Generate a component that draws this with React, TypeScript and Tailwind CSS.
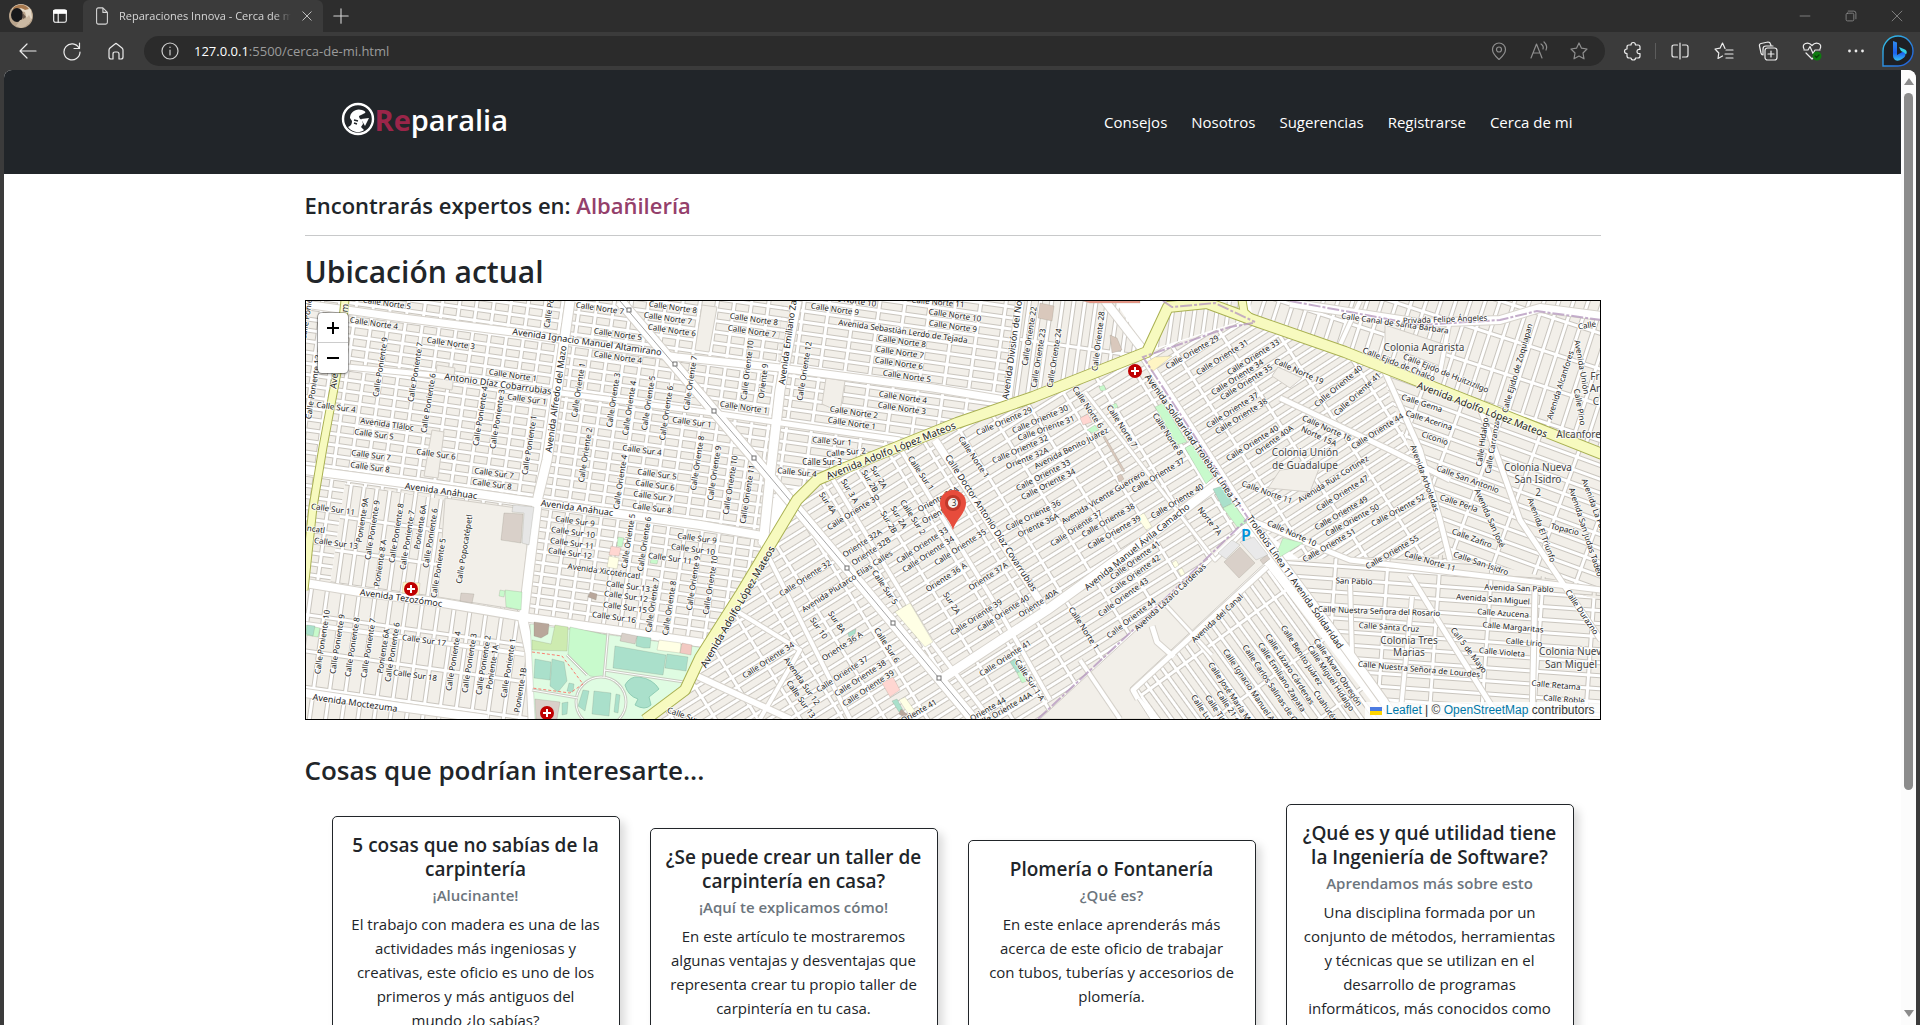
import type { ReactNode } from "react";

const UI = "font-['Open_Sans','Noto_Sans',sans-serif]";

/* ---------- Browser chrome ---------- */

function Icon({ children, size = 20, className = "" }: { children: ReactNode; size?: number; className?: string }) {
  return (
    <svg
      viewBox="0 0 20 20"
      width={size}
      height={size}
      fill="none"
      stroke="currentColor"
      strokeWidth="1.2"
      strokeLinecap="round"
      strokeLinejoin="round"
      className={className}
      aria-hidden="true"
    >
      {children}
    </svg>
  );
}

function IconButton({ label, className = "", children }: { label: string; className?: string; children: ReactNode }) {
  return (
    <button type="button" aria-label={label} className={`flex h-7 shrink-0 items-center justify-center ${className}`}>
      {children}
    </button>
  );
}

function TabStrip() {
  return (
    <div className="flex h-8 items-stretch bg-[#2d2d2d] text-[#d6d6d6]">
      <div className="flex w-[83px] items-center gap-[17px] pl-2">
        <button type="button" aria-label="Perfil" className="shrink-0">
          <svg viewBox="0 0 26 26" width="26" height="26">
            <circle cx="13" cy="13" r="12" fill="#b9a48c" />
            <path d="M4 6C8 0 18 0 23 7l1 8-4 6-3-12z" fill="#e4d9c8" />
            <path d="M5 5c5-5 13-4 16 1l-4 1C13 4 8 5 6 9z" fill="#a8794e" />
            <ellipse cx="9" cy="12" rx="6" ry="7" fill="#17181b" />
            <path d="M12 17c4 0 7-2 9-5l2 4c-2 5-6 8-10 9l-5-2z" fill="#cbb9a3" />
            <path d="M14 9l4 5-3 2z" fill="#6b5b50" />
          </svg>
        </button>
        <IconButton label="Áreas de trabajo" className="text-white">
          <Icon size={18}>
            <rect x="3" y="3" width="14" height="14" rx="2" />
            <path d="M3 4h14v3H3z" fill="currentColor" />
            <path d="M8 7v10" />
          </Icon>
        </IconButton>
      </div>
      <div className="flex w-60 items-center rounded-t-md bg-[#3b3b3b] pl-2.5">
        <Icon size={18} className="shrink-0">
          <path d="M4 3q0-2 2-2h5l5 5v11q0 2-2 2H6q-2 0-2-2zM11 1v5h5" />
        </Icon>
        <span className={`${UI} ml-2 flex-1 overflow-hidden mask-r-from-90% text-[11px] whitespace-nowrap`}>
          Reparaciones Innova - Cerca de mi
        </span>
        <IconButton label="Cerrar pestaña" className="w-8">
          <Icon size={14}>
            <path d="M4 4l12 12M16 4L4 16" />
          </Icon>
        </IconButton>
      </div>
      <IconButton label="Nueva pestaña" className="ml-1 w-7 self-center">
        <Icon size={18}>
          <path d="M10 2v16M2 10h16" />
        </Icon>
      </IconButton>
      <div className="ml-auto flex items-center text-[#8c8c8c]">
        <IconButton label="Minimizar" className="w-[46px]">
          <Icon size={14}>
            <path d="M3 10h14" />
          </Icon>
        </IconButton>
        <IconButton label="Restaurar" className="w-[46px]">
          <Icon size={14}>
            <rect x="3" y="6" width="11" height="11" rx="2" />
            <path d="M6 3h8q3 0 3 3v8" />
          </Icon>
        </IconButton>
        <IconButton label="Cerrar" className="w-[46px]">
          <Icon size={14}>
            <path d="M3 3l14 14M17 3L3 17" />
          </Icon>
        </IconButton>
      </div>
    </div>
  );
}

function Toolbar() {
  return (
    <div className="flex h-[38px] items-center bg-[#3b3b3b] pr-0.5 pl-1.5 text-[#ececec]">
      <IconButton label="Atrás" className="w-11">
        <Icon>
          <path d="M18 10H2M9 3l-7 7 7 7" />
        </Icon>
      </IconButton>
      <IconButton label="Actualizar" className="w-11">
        <Icon>
          <path d="M17 7A8 8 0 1 0 18 11M17.500 2v5.500H12" />
        </Icon>
      </IconButton>
      <IconButton label="Inicio" className="w-11">
        <Icon>
          <path d="M3 9q0-1 1-2l5-4q1-1 2 0l5 4q1 1 1 2v7q0 2-2 2h-2v-5q0-2-2-2h-2q-2 0-2 2v5H5q-2 0-2-2z" />
        </Icon>
      </IconButton>
      <div className="ml-1.5 flex h-[30px] flex-1 items-center rounded-full bg-[#2b2b2b] pr-1.5 pl-4">
        <Icon className="shrink-0 text-[#cfcfcf]">
          <circle cx="10" cy="10" r="8" />
          <path d="M10 9v5M10 6v0.500" />
        </Icon>
        <div className={`${UI} ml-3.5 flex-1 text-[13px] leading-5`}>
          <span className="text-white">127.0.0.1</span>
          <span className="text-[#9b9b9b]">:5500/cerca-de-mi.html</span>
        </div>
        <div className="flex text-[#8e8e8e]">
          <IconButton label="Ubicación" className="w-10">
            <Icon>
              <path d="M10 18.500C6 15 3.500 12 3.500 8.500a6.500 6.500 0 0 1 13 0C16.500 12 14 15 10 18.500z" />
              <circle cx="10" cy="8.500" r="2.500" />
            </Icon>
          </IconButton>
          <IconButton label="Leer en voz alta" className="w-10">
            <Icon>
              <path d="M2 17L7.500 3 13 17M4 12h7M12 3q3 2 2 5M15 1q4 4 2 8" />
            </Icon>
          </IconButton>
          <IconButton label="Agregar a favoritos" className="w-10">
            <Icon>
              <path d="M10 2l2.500 5.200 5.500.8-4 4 1 5.800-5-2.800-5 2.800 1-5.800-4-4 5.500-.8z" />
            </Icon>
          </IconButton>
        </div>
      </div>
      <IconButton label="Extensiones" className="ml-2.5 w-9">
        <Icon>
          <path d="M4 6q0-2 2-2h2q0-2.500 2.200-2.500T12.500 4H15q2 0 2 2v2.500q-3-.5-3 2t3 2V15q0 2-2 2h-2.500q0 2-2.200 2T8 17H6q-2 0-2-2v-2.500q-2.500 0-2.500-2.200T4 8z" />
        </Icon>
      </IconButton>
      <span className="ml-1 h-4 w-px bg-[#5c5c5c]" />
      <IconButton label="Pantalla dividida" className="ml-0.5 w-11">
        <Icon>
          <path d="M7.500 4H4Q2 4 2 6v8q0 2 2 2h3.500M12.500 4H16q2 0 2 2v8q0 2-2 2h-3.500M10 2v16" />
        </Icon>
      </IconButton>
      <IconButton label="Favoritos" className="w-11">
        <Icon>
          <path d="M11 7.500L8.500 2 6 7.200l-5 .8 3.800 4L4 17.500 8.500 15M12 9h7M11 13h8M12 17h7" />
        </Icon>
      </IconButton>
      <IconButton label="Colecciones" className="w-11">
        <Icon>
          <rect x="7" y="7" width="12" height="12" rx="2.500" />
          <path d="M13 10v6M10 13h6M5 14q-1.500 0-2-2L1.500 5Q1 3 3 2.500L10 1q2 0 2.500 2l.5 1.500M5 14V8q0-3 3-3h7" />
        </Icon>
      </IconButton>
      <IconButton label="Rendimiento" className="w-11">
        <Icon>
          <path d="M2 8Q0 4 3.500 2.500 7 1 10 4.500 13 1 16.500 2.500 20 4 18 8M2 9h4l2-3.500 3 7L13 9h5M4 12l6 6 2-2" />
          <circle cx="15" cy="15" r="4.500" fill="#0f7b10" stroke="none" />
          <path d="M13 15l1.500 1.500L17 14" stroke="#0a3d0a" />
        </Icon>
      </IconButton>
      <IconButton label="Más opciones" className="w-11">
        <Icon>
          <g fill="currentColor" stroke="none">
            <circle cx="3.500" cy="10" r="1.400" />
            <circle cx="10" cy="10" r="1.400" />
            <circle cx="16.500" cy="10" r="1.400" />
          </g>
        </Icon>
      </IconButton>
      <IconButton label="Bing" className="w-10">
        <svg viewBox="0 0 32 32" width="32" height="32" aria-hidden="true">
          <defs>
            <linearGradient id="bing-ring" x1="0" y1="0" x2="1" y2="1">
              <stop offset="0" stopColor="#35c6e8" />
              <stop offset="1" stopColor="#2257d8" />
            </linearGradient>
            <linearGradient id="bing-b" x1="0" y1="0" x2="0" y2="1">
              <stop offset="0" stopColor="#2f8cf0" />
              <stop offset="0.600" stopColor="#1c60ee" />
              <stop offset="1" stopColor="#36c3f2" />
            </linearGradient>
          </defs>
          <path d="M1 31V16A15 15 0 1 1 16 31z" fill="#1e2024" stroke="url(#bing-ring)" strokeWidth="1.400" />
          <path d="M11 6l4 1.500V20l8-4.500q2 6-3 8.500-4 3-7 1-2-1.500-2-4z" fill="url(#bing-b)" />
          <path d="M17 12l6 2.500q3 2 1 5l-2-2-3-1.500z" fill="#35d0e6" />
        </svg>
      </IconButton>
    </div>
  );
}

/* ---------- Map ---------- */

type Label = [text: string, x: number, y: number, angle: number];

const STREETS: Label[] = [
  ["Calle Norte 5", 387, 303, 8], ["Calle Norte 4", 374, 323, 8], ["Calle Norte 3", 451, 343, 8],
  ["Calle Norte 7", 600, 308, 8], ["Calle Norte 8", 673, 307, 8], ["Calle Norte 7", 668, 318, 8],
  ["Calle Norte 6", 672, 330, 8], ["Calle Norte 5", 618, 334, 8], ["Calle Norte 4", 618, 357, 8],
  ["Calle Norte 1", 513, 375, 8], ["Calle Sur 1", 527, 399, 8], ["Calle Sur 1", 692, 422, 8],
  ["Calle Sur 4", 642, 450, 8], ["Calle Sur 4", 336, 407, 8], ["Avenida Tláloc", 387, 424, 8],
  ["Calle Sur 5", 374, 434, 8], ["Calle Sur 7", 371, 455, 8], ["Calle Sur 6", 436, 454, 8],
  ["Calle Norte 1", 744, 407, 8], ["Calle Poniente 9", 380, 367, -81], ["Calle Poniente 7", 415, 372, -81],
  ["Calle Poniente 6", 428, 403, -81], ["Calle Poniente 4", 480, 416, -81], ["Calle Poniente 3", 497, 419, -81],
  ["Calle Poniente 1", 529, 445, -81], ["Calle Poniente 12", 313, 387, -81], ["Calle Poniente 1", 551, 298, -81],
  ["Calle Poniente", 307, 313, -81], ["Calle Oriente 1", 578, 390, -81], ["Calle Oriente 3", 613, 400, -81],
  ["Calle Oriente 4", 629, 408, -81], ["Calle Oriente 5", 648, 403, -81], ["Calle Oriente 6", 666, 413, -81],
  ["Calle Oriente 7", 690, 383, -81], ["Calle Oriente 2", 585, 455, -81], ["Calle Oriente 8", 697, 463, -81],
  ["Calle Oriente 9", 714, 473, -81], ["Calle Oriente 10", 730, 485, -81], ["Calle Oriente 4", 620, 482, -81],
  ["Calle Sur 8", 370, 467, 8], ["Calle Sur 7", 494, 473, 8], ["Calle Sur 8", 492, 484, 8],
  ["Calle Sur 11", 333, 509, 8], ["Calle Sur 13", 336, 543, 8], ["Calle Sur 9", 575, 521, 8],
  ["Calle Sur 10", 573, 532, 8], ["Calle Sur 11", 572, 543, 8], ["Calle Sur 12", 570, 553, 8],
  ["Avenida Xicoténcatl", 604, 571, 8], ["Calle Sur 13", 628, 586, 8], ["Calle Sur 12", 626, 596, 8],
  ["Calle Sur 15", 625, 607, 8], ["Calle Sur 16", 614, 617, 8], ["Calle Sur 5", 657, 474, 8],
  ["Calle Sur 6", 655, 485, 8], ["Calle Sur 7", 653, 496, 8], ["Calle Sur 8", 652, 508, 8],
  ["Calle Sur 9", 697, 538, 8], ["Calle Sur 10", 693, 549, 8], ["Calle Sur 11", 670, 558, 8],
  ["Calle Sur 17", 424, 640, 8], ["Calle Sur 18", 415, 675, 8], ["Poniente 9A", 362, 520, -81],
  ["Calle Poniente 9", 372, 530, -81], ["Poniente 8 A", 380, 563, -81], ["Calle Poniente 8", 396, 533, -81],
  ["Calle Poniente 7", 407, 540, -81], ["Poniente 6A", 420, 527, -81], ["Calle Poniente 6", 430, 538, -81],
  ["Calle Poniente 5", 438, 568, -81], ["Calle Popocatépetl", 464, 549, -81], ["Calle Oriente 5", 628, 541, -81],
  ["Calle Oriente 6", 644, 544, -81], ["Calle Oriente 7", 652, 605, -81], ["Calle Oriente 8", 669, 608, -81],
  ["Calle Oriente 9", 693, 583, -81], ["Calle Oriente 10", 710, 585, -81], ["Calle Poniente 10", 322, 642, -81],
  ["Calle Poniente 9", 337, 644, -81], ["Calle Poniente 8", 352, 647, -81], ["Calle Poniente 7", 368, 648, -81],
  ["Poniente 6A", 383, 651, -81], ["Calle Poniente 6", 392, 652, -81], ["Calle Poniente 4", 453, 661, -81],
  ["Calle Poniente 3", 469, 663, -81], ["Calle Poniente 2", 483, 665, -81], ["Poniente 1A", 492, 667, -81],
  ["Calle Poniente 1", 508, 668, -81], ["Poniente 1B", 520, 690, -81], ["ncatl", 316, 529, 8], ["Calle Sur", 683, 715, 20],
  ["Calle Norte 8", 754, 319, 8], ["Calle Norte 7", 752, 331, 8], ["Calle Norte 9", 835, 309, 8],
  ["Calle Norte 10", 955, 315, 8], ["Calle Norte 9", 953, 326, 8], ["Avenida Sebastián Lerdo de Tejada", 903, 331, 8],
  ["Calle Norte 8", 902, 341, 8], ["Calle Norte 7", 900, 352, 8], ["Calle Norte 6", 899, 363, 8],
  ["Calle Norte 5", 907, 376, 8], ["Calle Norte 4", 903, 397, 8], ["Calle Norte 3", 902, 408, 8],
  ["Calle Norte 2", 854, 412, 8], ["Calle Norte 1", 852, 423, 8], ["Calle Norte 10", 850, 300, 8],
  ["Calle Norte 11", 938, 302, 5], ["Calle Sur 1", 832, 441, 5], ["Calle Sur 2", 846, 452, -5],
  ["Calle Sur 3", 822, 462, 0], ["Calle Sur 4", 797, 472, 6], ["Calle Oriente 10", 747, 370, -83],
  ["Oriente 9", 763, 381, -83], ["Calle Oriente 12", 804, 371, -81], ["Calle Oriente 22", 1029, 336, -81],
  ["Calle Oriente 23", 1038, 358, -81], ["Calle Oriente 24", 1054, 358, -81], ["Calle Oriente 28", 1098, 341, -83],
  ["Calle Oriente 11", 747, 494, -81], ["Calle Oriente 29", 1004, 421, -23], ["Calle Oriente 30", 1040, 419, -23],
  ["Calle Oriente 31", 1046, 428, -20], ["Calle Oriente 32", 1020, 449, -23], ["Oriente 32A", 1027, 458, -22],
  ["Avenida Benito Juárez", 1071, 448, -27], ["Calle Oriente 33", 1043, 475, -27], ["Calle Oriente 34", 1048, 484, -27],
  ["Calle Oriente 36", 1033, 515, -26], ["Oriente 36A", 1038, 525, -26], ["Avenida Vicente Guerrero", 1103, 497, -31],
  ["Calle Oriente 37", 1076, 528, -33], ["Calle Oriente 38", 1108, 520, -30], ["Calle Oriente 39", 1114, 532, -30],
  ["Calle Norte 6", 1088, 407, 56], ["Calle Norte 7", 1122, 426, 57], ["Calle Norte 1", 974, 457, 56],
  ["Calle Sur 1", 921, 473, 56], ["Sur 2A", 879, 477, 60], ["Sur 2B", 870, 481, 60], ["Sur 3 A", 850, 491, 60],
  ["Sur 4A", 828, 503, 57], ["Calle Oriente 30", 853, 512, -32], ["Sur 2A", 899, 517, 60], ["Sur 2B", 889, 522, 60],
  ["Calle Sur 2", 913, 517, 57], ["Oriente 32A", 938, 499, -28], ["Oriente 32", 940, 512, -28],
  ["Calle Oriente 33", 922, 545, -33], ["Calle Oriente 34", 928, 554, -33], ["Calle Oriente 35", 960, 547, -33],
  ["Oriente 32A", 862, 543, -33], ["Oriente 32B", 871, 551, -33], ["Avenida Plutarco Elías Calles", 847, 581, -33],
  ["Calle Oriente 32", 805, 578, -33], ["Oriente 36 A", 946, 577, -33], ["Oriente 37A", 988, 576, -33],
  ["Calle Oriente 39", 976, 617, -33], ["Calle Oriente 40", 1003, 613, -33], ["Oriente 40A", 1038, 603, -33],
  ["Calle Oriente 41", 1135, 560, -36], ["Calle Oriente 42", 1135, 574, -36], ["Calle Oriente 43", 1123, 597, -36],
  ["Calle Oriente 44", 1131, 618, -38], ["Calle Sur 5", 885, 587, 56], ["Sur 8A", 837, 622, 56], ["Sur 10", 819, 628, 56],
  ["Oriente 36 A", 842, 646, -33], ["Calle Oriente 34", 768, 660, -33], ["Avenida Sur 12", 802, 681, 55],
  ["Calle Sur 13", 801, 699, 55], ["Calle Oriente 37", 842, 674, -33], ["Calle Oriente 38", 860, 678, -33],
  ["Calle Oriente 39", 868, 688, -33], ["Calle Sur 6", 887, 645, 57], ["Sur 2A", 952, 603, 57],
  ["Calle Oriente 41", 1005, 658, -33], ["Calle Sur 1-A", 1030, 680, 57], ["Calle Oriente 44", 979, 714, -30],
  ["Calle Oriente 44A", 1003, 710, -30], ["Calle Oriente 41", 910, 716, -30], ["Calle Norte 1", 1084, 628, 57],
  ["Calle Oriente 29", 1192, 352, -30], ["Calle Oriente 31", 1222, 357, -32], ["Calle Oriente 33", 1253, 357, -32],
  ["Calle Oriente 34", 1237, 377, -32], ["Calle Oriente 35", 1246, 382, -32], ["Calle Norte 19", 1299, 371, 24],
  ["Calle Oriente 40", 1338, 386, -40], ["Calle Oriente 41", 1357, 394, -42], ["Calle Oriente 37", 1232, 410, -32],
  ["Calle Oriente 38", 1241, 416, -32], ["Calle Oriente 40", 1252, 443, -32], ["Oriente 40A", 1274, 440, -36],
  ["Calle Norte 16", 1327, 428, 24], ["Norte 15A", 1319, 436, 24], ["Calle Oriente 44", 1377, 431, -32],
  ["Calle Norte 8", 1168, 434, 57], ["Calle Oriente 37", 1158, 475, -31], ["Calle Oriente 40", 1177, 501, -31],
  ["Calle Canal de Santa Bárbara", 1395, 323, 8], ["Privada Felipe Ángeles", 1445, 319, -2], ["Calle", 1587, 325, -10],
  ["Calle Ejido de Chalco", 1399, 364, 22], ["Calle Ejido de Huitzizilgo", 1446, 373, 22],
  ["Calle Ejido de Zoquiapan", 1517, 368, -74], ["Avenida Alcanfores", 1560, 385, -72], ["Avenida Unión", 1582, 367, 80],
  ["Calle Pino", 1580, 407, 80], ["Calle Gema", 1422, 403, 18], ["Calle Acerina", 1429, 420, 18], ["Ciconio", 1435, 438, 18],
  ["Calle Hidalgo", 1482, 442, -82], ["Calle Carranza", 1492, 447, -80], ["Calle San Antonio", 1468, 479, 20],
  ["Avenida Arboledas", 1425, 478, 70], ["Calle Perla", 1459, 503, 19], ["Avenida Ruiz Cortinez", 1333, 479, -32],
  ["Calle Oriente 47", 1342, 493, -32], ["Calle Norte 11", 1267, 492, 20], ["Calle Oriente 49", 1341, 513, -30],
  ["Calle Oriente 50", 1352, 520, -28], ["Calle Oriente 52", 1398, 510, -28], ["Calle Oriente 51", 1329, 545, -30],
  ["Calle Oriente 55", 1392, 552, -30], ["Calle Norte 10", 1292, 533, 24], ["Calle Norte 11", 1430, 561, 17],
  ["Calle Zafiro", 1472, 538, 20], ["Calle San Isidro", 1481, 563, 19], ["Topacio", 1565, 529, 14],
  ["Avenida San José", 1490, 518, 66], ["Avenida El Triunfo", 1542, 530, 70], ["Avenida San Judas Tadeo", 1586, 532, 72],
  ["Avenida La Paz", 1594, 505, 70], ["Norte 7A", 1210, 521, 52], ["Avenida Lázaro Cárdenas", 1170, 597, -43],
  ["Avenida del Canal", 1217, 618, -43], ["San Pablo", 1354, 581, 2], ["Avenida San Pablo", 1519, 588, 2],
  ["Avenida San Miguel", 1493, 599, 4], ["Calle Nuestra Señora del Rosario", 1379, 611, 2], ["Calle Azucena", 1503, 613, 4],
  ["Calle Margaritas", 1513, 627, 5], ["Calle Santa Cruz", 1389, 627, 4], ["Calle Lirio", 1524, 642, 5],
  ["Calle Violeta", 1502, 652, 5], ["Calle Nuestra Señora de Lourdes", 1419, 669, 5], ["Calle Retama", 1556, 685, 5],
  ["Calle Roble", 1564, 699, 5], ["Call 5 de Mayo", 1469, 650, 53], ["Calle Durazno", 1582, 612, 56],
  ["Calle Álvaro Obregón", 1338, 672, 56], ["Calle Miguel Hidalgo", 1331, 678, 56], ["Calle Benito Juárez", 1302, 655, 57],
  ["Calle Lázaro Cárdenas", 1290, 669, 57], ["Calle Emiliano Zapata", 1282, 677, 57],
  ["Calle Carlos Salinas de Gortari", 1276, 692, 56], ["Calle Ignacio Manuel Altamirano", 1259, 700, 56],
  ["Calle José María Morelos", 1236, 701, 56], ["Calle 21 de Marzo", 1237, 719, 56], ["Calle Tierra", 1219, 713, 56],
  ["Calle Luis", 1203, 710, 56], ["Cuahutémoc", 1329, 711, 56],
];

const AVENUES: Label[] = [
  ["Avenida Ignacio Manuel Altamirano", 587, 342, 8], ["Antonio Díaz Cobarrubias", 498, 384, 8],
  ["Avenida Alfredo del Mazo", 556, 399, -82], ["Avenida Anáhuac", 441, 491, 8], ["Avenida Anáhuac", 577, 508, 8],
  ["Avenida Tezozómoc", 401, 598, 8], ["Avenida Moctezuma", 355, 703, 8], ["Avenida Emiliano Zapata", 789, 333, -82],
  ["Avenida División del Norte", 1013, 344, -82], ["Calle Doctor Antonio Díaz Covarrubias", 991, 523, 57],
  ["Avenida Manuel Ávila Camacho", 1137, 547, -39], ["Avenida Solidaridad Trolebús Línea 11", 1193, 441, 55],
  ["Trolebús Línea 11 Avenida Solidaridad", 1295, 582, 55], ["Ave", 334, 381, -84], ["m", 345, 308, -84],
];

const MAIN_AVENUES: Label[] = [
  ["Avenida Adolfo López Mateos", 738, 607, -60],
  ["Avenida Adolfo López Mateos", 891, 451, -22],
  ["Avenida Adolfo López Mateos", 1482, 410, 21],
];

const PLACES: Label[] = [
  ["Colonia Agrarista", 1424, 348, 0], ["Colonia Unión", 1305, 453, 0], ["de Guadalupe", 1305, 466, 0],
  ["Colonia Nueva", 1538, 468, 0], ["San Isidro", 1538, 480, 0], ["2", 1538, 493, 0], ["Colonia Tres", 1409, 641, 0],
  ["Marias", 1409, 653, 0], ["Colonia Nueva", 1573, 652, 0], ["San Miguel", 1571, 665, 0], ["Alcanfores", 1581, 435, 0],
  ["Fr", 1595, 377, 0], ["Ar", 1595, 389, 0], ["C", 1596, 402, 0],
];

/* Block sizes and heading of each neighbourhood's street grid. */
const GRIDS = [
  { id: "west", w: 17, h: 11, angle: 8 },
  { id: "west-tall", w: 13, h: 34, angle: 8 },
  { id: "south-west", w: 16, h: 36, angle: 8 },
  { id: "north", w: 25, h: 11, angle: 8 },
  { id: "north-tall", w: 11, h: 60, angle: 8 },
  { id: "centre", w: 36, h: 11, angle: -32 },
  { id: "union", w: 48, h: 10, angle: -33 },
  { id: "east", w: 42, h: 13, angle: 20 },
  { id: "north-east", w: 14, h: 34, angle: 18 },
  { id: "south-east", w: 52, h: 13, angle: 4 },
  { id: "canal", w: 62, h: 11, angle: 54 },
];

const DISTRICTS: [grid: string, points: string][] = [
  ["west", "305,301 800,301 767,540 700,655 523,620 305,586"],
  ["south-west", "305,586 523,618 531,719 305,719"],
  ["north", "782,301 1024,301 1008,402 820,478 768,500"],
  ["north-tall", "1022,301 1115,301 1145,348 1008,400"],
  ["centre", "800,495 830,475 1145,358 1250,520 1040,719 645,719 690,690 745,600"],
  ["union", "1148,352 1253,318 1380,368 1450,560 1300,560 1245,515"],
  ["north-tall", "1170,305 1240,301 1250,318 1150,350"],
  ["north-east", "1250,301 1601,301 1601,450 1253,320"],
  ["east", "1380,368 1601,455 1601,600 1450,560"],
  ["south-east", "1275,560 1450,555 1601,590 1601,719 1392,719"],
  ["canal", "1267,567 1385,719 1160,719 1133,690"],
];

const OPEN_BLOCKS = [
  "445,498 531,510 520,610 438,597",
  "1040,719 1245,530 1268,560 1130,688 1150,719",
  "437,365 455,368 452,390 434,387",
  "432,430 444,432 438,478 424,476",
  "826,378 845,381 840,412 822,404",
  "702,305 717,307 709,352 695,350",
  "1385,325 1446,345 1440,366 1385,345",
  "1278,367 1302,378 1290,388 1272,376",
  "1280,470 1320,466 1310,492 1268,488",
];

const WHITE_ROADS: [points: string, width: number][] = [
  ["305,304 403,318 513,332 677,357 780,368 933,388 1005,400", 7],
  ["347,367 433,375 553,392 713,413 843,432 900,440", 5],
  ["305,470 403,483 540,503 700,525 768,537", 8],
  ["305,583 360,592 443,603 530,618 703,643", 8],
  ["305,624 400,637 524,654", 4],
  ["305,693 400,707 487,719", 8],
  ["570,301 547,460 538,497 523,620 530,653 533,719", 9],
  ["797,301 780,390 770,477 763,545", 9],
  ["1020,301 1007,403", 8],
  ["620,301 754,458 847,568 893,623 973,719", 10],
  ["1105,301 1143,350", 8],
  ["940,680 1047,610 1140,543 1220,482", 9],
  ["1145,358 1250,520 1300,587 1347,650 1383,700 1395,719", 8],
  ["1267,567 1133,690 1138,699", 5],
  ["935,440 1047,612", 7],
  ["1085,392 1215,560 1246,530", 3],
  ["830,475 930,640 990,719", 4],
  ["895,440 1000,612 1050,700", 4],
  ["760,540 850,719", 4],
  ["735,610 800,650 760,719", 4],
  ["695,675 790,719", 6],
  ["1385,372 1420,450 1440,520 1450,560", 5],
  ["1478,402 1520,520 1601,640", 5],
  ["1410,575 1450,640 1500,719", 5],
  ["1350,580 1352,655", 4],
  ["1535,590 1532,719", 5],
  ["1412,597 1400,719", 4],
  ["1280,398 1390,450 1450,480", 5],
  ["1250,520 1350,560 1601,590", 5],
  ["1360,301 1340,345", 4],
  ["1450,320 1440,372", 4],
  ["1290,303 1420,323 1500,320 1540,308 1601,316", 8],
  ["1163,602 1212,655", 3],
  ["1152,626 1157,642 1174,657", 5],
  ["1080,660 1120,719", 4],
];

const YELLOW_ROADS: [points: string, width: number][] = [
  ["645,720 685,690 700,658 740,595 797,500 817,480 840,470 957,423 1033,397 1147,352 1168,307 1207,303 1253,320 1345,352 1602,454", 11],
  ["345,300 338,367 323,447 313,507 304,590", 8],
  ["1242,300 1244,312 1253,320", 8],
];

const BOUNDARIES = [
  "1038,719 1133,630 1248,518 1143,357 1230,327 1253,323",
  "1163,301 1172,307 1215,303 1255,322",
  "1290,301 1420,325 1500,320 1537,311 1601,320",
];

const AREAS: [fill: string, points: string][] = [
  ["#dffce2", "530,624 705,648 698,662 684,690 643,719 535,719"],
  ["#cdebb0", "532,650 532,640 551,644 555,625 568,627 567,651"],
  ["#c8facc", "570,627 607,635 605,678 590,676 568,655"],
  ["#aae0cb", "615,646 666,655 663,675 613,668"],
  ["#aae0cb", "667,654 688,657 686,671 665,668"],
  ["#aae0cb", "535,659 551,662 550,680 534,678"],
  ["#aae0cb", "552,659 564,662 567,681 558,692 550,686"],
  ["#aae0cb", "569,683 574,684 573,692 567,691"],
  ["#aae0cb", "583,690 589,691 585,711 578,706"],
  ["#aae0cb", "594,691 611,693 609,716 592,714"],
  ["#aae0cb", "616,694 620,695 618,713 614,712"],
  ["#aae0cb", "562,703 568,702 567,714 562,715"],
  ["#aae0cb", "637,636 651,638 650,648 644,648 636,646"],
  ["#ffffe5", "659,640 681,643 680,653 657,650"],
  ["#f2c9c2", "682,643 692,645 691,655 680,653"],
  ["#d9d0c9", "535,699 560,702 557,719 536,719"],
  ["#d9d0c9", "622,633 637,636 635,644 620,641"],
  ["#b9a79b", "534,622 549,624 548,634 541,638 534,636"],
  ["#e6e6e6", "513,505 534,507 529,545 522,543 524,513 512,512"],
  ["#d9d0c9", "504,513 523,514 521,543 501,540"],
  ["#d9d0c9", "461,593 474,594 472,603 460,601"],
  ["#c8facc", "505,590 522,592 521,610 506,607"],
  ["#c8facc", "500,590 505,591 504,597 499,596"],
  ["#c8facc", "305,625 320,628 318,637 305,635"],
  ["#aae0cb", "307,625 315,626 313,636 306,634"],
  ["#fff5c4", "403,582 420,583 419,595 402,593"],
  ["#c8facc", "618,537 624,538 622,547 617,546"],
  ["#ffd6d1", "611,546 621,548 619,556 609,555"],
  ["#ffffe5", "609,556 619,558 617,569 607,567"],
  ["#c8facc", "651,559 658,560 657,564 650,563"],
  ["#b9a79b", "590,592 597,594 596,600 588,597"],
  ["#ffffe5", "895,612 910,603 933,642 925,647"],
  ["#ffd6d1", "882,683 893,677 900,690 890,697"],
  ["#aae0cb", "848,633 856,629 855,634 849,637"],
  ["#aae0cb", "892,701 897,699 903,710 899,712"],
  ["#ffffe5", "899,700 905,697 915,711 909,715"],
  ["#b9a79b", "901,709 909,716 905,718 899,714"],
  ["#aae0cb", "1010,662 1015,659 1021,671 1017,673"],
  ["#c8facc", "1017,673 1021,671 1027,681 1022,683"],
  ["#ffd6d1", "1080,418 1088,414 1092,422 1083,425"],
  ["#c8facc", "1087,430 1095,425 1099,430 1092,433"],
  ["#c8facc", "1099,387 1104,385 1106,390 1101,391"],
  ["#c8facc", "1112,405 1116,403 1118,407 1114,409"],
  ["#d9c8bc", "1103,437 1105,436 1125,471 1123,472"],
  ["#d9c8bc", "1117,476 1121,474 1124,479 1119,482"],
  ["#d9c8bc", "1040,303 1054,306 1052,321 1038,318"],
  ["#d9c8bc", "1110,335 1117,338 1122,350 1112,353"],
  ["#ef9a8a", "1083,301 1140,301 1140,303 1090,303"],
  ["#c8facc", "1155,407 1163,403 1187,442 1177,445"],
  ["#c8facc", "1185,448 1192,444 1213,477 1206,484"],
  ["#aae0cb", "1213,489 1222,486 1233,503 1223,508"],
  ["#c8facc", "1223,508 1233,503 1247,522 1238,528"],
  ["#e9e9ea", "1218,553 1232,540 1240,545 1226,559"],
  ["#e9e9ea", "1240,542 1254,537 1268,555 1256,560"],
  ["#d9d0c9", "1224,562 1240,547 1255,563 1239,578"],
  ["#d9d0c9", "1260,560 1267,555 1270,559 1263,564"],
  ["#c8facc", "1283,538 1303,543 1280,557 1278,550"],
  ["#ffffe5", "1137,517 1144,513 1152,527 1146,530"],
  ["#ffffe5", "1172,563 1176,560 1179,565 1175,568"],
  ["#ffffe5", "1178,570 1182,568 1185,574 1181,576"],
  ["#fff5c4", "1147,362 1155,357 1172,356 1152,372"],
];

const CLINICS = [[411, 589], [547, 713], [1135, 371]];
const PYLONS = [[629, 310], [675, 364], [714, 411], [754, 458], [847, 568], [893, 623], [939, 678]];

function MapLabels({ items, className }: { items: Label[]; className: string }) {
  return (
    <g className={className} textAnchor="middle" paintOrder="stroke" stroke="#ffffff" strokeOpacity="0.700" strokeWidth="2" strokeLinejoin="round">
      {items.map(([text, x, y, angle], i) => (
        <text key={i} transform={`translate(${x} ${y}) rotate(${angle})`} dy="3">
          {text}
        </text>
      ))}
    </g>
  );
}

function StreetMap() {
  return (
    <svg viewBox="306 301 1294 418" preserveAspectRatio="xMidYMid slice" className="block h-full w-full bg-white" role="img" aria-label="Mapa de la ubicación actual">
      <defs>
        {GRIDS.map((g) => (
          <pattern key={g.id} id={`grid-${g.id}`} width={g.w} height={g.h} patternUnits="userSpaceOnUse" patternTransform={`rotate(${g.angle} 305 301)`}>
            <rect x="1.500" y="1.500" width={g.w - 4} height={g.h - 4} fill="#f2efe9" stroke="#c9c5be" strokeWidth="1" />
          </pattern>
        ))}
      </defs>
      {DISTRICTS.map(([grid, points], i) => (
        <polygon key={i} points={points} fill={`url(#grid-${grid})`} />
      ))}
      <polygon points="345,483 445,500 436,600 330,585" fill="#ffffff" />
      <polygon points="345,483 445,500 436,600 330,585" fill="url(#grid-west-tall)" />
      {OPEN_BLOCKS.map((points) => (
        <polygon key={points} points={points} fill="#f2efe9" stroke="#d2cec7" />
      ))}
      <g fill="none" stroke="#d6d2cb" strokeLinejoin="round">
        {WHITE_ROADS.map(([points, width]) => (
          <polyline key={points} points={points} strokeWidth={width + 2} />
        ))}
      </g>
      <g fill="none" stroke="#ffffff" strokeLinejoin="round">
        {WHITE_ROADS.map(([points, width]) => (
          <polyline key={points} points={points} strokeWidth={width} />
        ))}
      </g>
      {AREAS.map(([fill, points]) => (
        <polygon key={points} points={points} fill={fill} stroke="#7a7a6a" strokeOpacity="0.200" />
      ))}
      <path d="M625 685q5-9 14-8 14 2 20 12l-10 8 2 8q-6 6-16 0l3-6q-10-3-13-14z" fill="#aae0cb" stroke="#8fcdb5" />
      <g fill="none" stroke="#c9cdc2">
        <ellipse cx="601" cy="702" rx="25" ry="25" strokeWidth="3" />
        <ellipse cx="601" cy="702" rx="25" ry="25" strokeWidth="1" stroke="#ffffff" />
        <path d="M567 655l20 20M608 633l-4 44M604 670l80 12M532 690l46 8" strokeWidth="3" />
        <path d="M567 655l20 20M608 633l-4 44M604 670l80 12M532 690l46 8" stroke="#ffffff" />
      </g>
      <path d="M532 652l30 4 21 28-13 9-38-5" fill="none" stroke="#fa8072" strokeDasharray="3 2" />
      <polyline points="620,301 754,458 847,568 893,623 973,719" fill="none" stroke="#a6a6a6" />
      <g fill="none" stroke="#a9b052" strokeLinejoin="round">
        {YELLOW_ROADS.map(([points, width]) => (
          <polyline key={points} points={points} strokeWidth={width + 1} />
        ))}
      </g>
      <g fill="none" stroke="#f7fabf" strokeLinejoin="round">
        {YELLOW_ROADS.map(([points, width]) => (
          <polyline key={points} points={points} strokeWidth={width - 1} />
        ))}
      </g>
      <g fill="none" stroke="#b79abf" strokeOpacity="0.800" strokeWidth="2" strokeDasharray="12 2 3 2">
        {BOUNDARIES.map((points) => (
          <polyline key={points} points={points} />
        ))}
      </g>
      {PYLONS.map(([x, y]) => (
        <rect key={x} x={x - 2} y={y - 2} width="4" height="4" fill="#ffffff" stroke="#707070" />
      ))}
      <g className="font-['Noto_Sans',sans-serif]">
        <MapLabels items={STREETS} className="fill-[#222222] text-[8px]" />
        <MapLabels items={AVENUES} className="fill-[#222222] text-[9px]" />
        <MapLabels items={MAIN_AVENUES} className="fill-[#222222] text-[10px]" />
        <MapLabels items={PLACES} className="fill-[#444444] text-[10px]" />
        <text x="1246" y="541" textAnchor="middle" className="fill-[#0092da] text-base font-semibold">P</text>
      </g>
      {CLINICS.map(([x, y]) => (
        <g key={x}>
          <circle cx={x} cy={y} r="7" fill="#bf0000" />
          <path d={`M${x - 4} ${y}h8M${x} ${y - 4}v8`} stroke="#ffffff" strokeWidth="2" />
        </g>
      ))}
      <path d="M953 530C951 521 940 513 940 503a13 13 0 0 1 26 0c0 10-11 18-13 27z" fill="#e74c3c" />
      <circle cx="953" cy="503" r="6.500" fill="#f5f3ee" stroke="#c0392b" strokeWidth="3" />
      <text x="954" y="506" textAnchor="middle" className="fill-[#333333] font-['Noto_Sans',sans-serif] text-[8px]">3</text>
    </svg>
  );
}

function MapPanel() {
  return (
    <div className="relative h-[420px] overflow-hidden border border-black">
      <StreetMap />
      <div className="absolute top-3 left-3 flex flex-col rounded-sm bg-white text-black shadow-[0_0_0_1px_rgba(0,0,0,0.25),0_1px_3px_rgba(0,0,0,0.4)]">
        <button type="button" aria-label="Acercar" className="flex h-[30px] w-[30px] items-center justify-center border-b border-[#cccccc]">
          <svg viewBox="0 0 14 14" width="14" height="14" stroke="currentColor" strokeWidth="2">
            <path d="M7 1v12M1 7h12" />
          </svg>
        </button>
        <button type="button" aria-label="Alejar" className="flex h-[30px] w-[30px] items-center justify-center">
          <svg viewBox="0 0 14 14" width="14" height="14" stroke="currentColor" strokeWidth="2">
            <path d="M1 7h12" />
          </svg>
        </button>
      </div>
      <div className="absolute right-0 bottom-0 flex items-center bg-white/80 px-[5px] font-['Liberation_Sans',Arial,sans-serif] text-xs leading-[17px] text-[#333333]">
        <a href="#leaflet" className="flex items-center gap-1 text-[#0078a8]">
          <svg viewBox="0 0 12 8" width="12" height="8" aria-hidden="true">
            <path fill="#4c7be1" d="M0 0h12v4H0z" />
            <path fill="#ffd500" d="M0 4h12v4H0z" />
          </svg>
          Leaflet
        </a>
        <span className="whitespace-pre"> | © </span>
        <a href="#osm" className="text-[#0078a8]">OpenStreetMap</a>
        <span className="whitespace-pre"> contributors</span>
      </div>
    </div>
  );
}

/* ---------- Page ---------- */

const NAV = ["Consejos", "Nosotros", "Sugerencias", "Registrarse", "Cerca de mi"];

const ARTICLES = [
  {
    title: "5 cosas que no sabías de la carpintería",
    subtitle: "¡Alucinante!",
    body: "El trabajo con madera es una de las actividades más ingeniosas y creativas, este oficio es uno de los primeros y más antiguos del mundo\u00a0¿lo sabías?",
  },
  {
    title: "¿Se puede crear un taller de carpintería en casa?",
    subtitle: "¡Aquí te explicamos cómo!",
    body: "En este artículo te mostraremos algunas ventajas y desventajas que representa crear tu propio taller de carpintería en tu casa.",
  },
  {
    title: "Plomería o Fontanería",
    subtitle: "¿Qué es?",
    body: "En este enlace aprenderás más acerca de este oficio de trabajar con\u00a0tubos, tuberías y accesorios de plomería.",
  },
  {
    title: "¿Qué es y qué utilidad tiene la Ingeniería de Software?",
    subtitle: "Aprendamos más sobre esto",
    body: "Una disciplina formada por un conjunto de métodos, herramientas y técnicas que se utilizan en el desarrollo de programas informáticos, más conocidos como software.",
  },
];

function SiteHeader() {
  return (
    <header className="bg-[#212529]">
      <div className="mx-auto flex h-[104px] max-w-[1320px] items-center justify-between pr-10 pl-12">
        <a href="#inicio" className="flex items-center pb-1.5 text-[29px] leading-none font-semibold text-white">
          <svg viewBox="0 0 34 34" width="34" height="34" aria-hidden="true">
            <circle cx="17" cy="17" r="15" fill="none" stroke="#ffffff" strokeWidth="2.400" />
            <path d="M9 16c0-6 6-10 12-8 3 1 4 2 3 3l-6 3c0 2 1 3 3 4l1 4-2 3 3 3c-5 4-12 2-16-3 3-1 4-3 4-6z" fill="#ffffff" />
            <path d="M20 17l8-1-4 8z" fill="#ffffff" />
            <path d="M13 18l4 1M13 21l3 1" stroke="#212529" strokeWidth="1.500" />
          </svg>
          <span className="font-bold text-[#9b2549]">Re</span>paralia
        </a>
        <nav className="flex gap-6 text-[15px] text-white">
          {NAV.map((item) => (
            <a key={item} href="#seccion">{item}</a>
          ))}
        </nav>
      </div>
    </header>
  );
}

function ArticleCard({ title, subtitle, body }: { title: string; subtitle: string; body: string }) {
  return (
    <article className="mx-[15px] rounded-[5px] border border-[#212529] bg-white px-4 pt-4 pb-12 text-center shadow-[5px_5px_10px_rgba(0,0,0,0.15)]">
      <h3 className="-mx-1 mb-1 text-[19px] leading-6 font-semibold">{title}</h3>
      <h4 className="mb-[7px] text-[15px] leading-5 font-semibold text-[#6c757d]">{subtitle}</h4>
      <p className="text-[15px] leading-6">{body}</p>
    </article>
  );
}

function ScrollBar() {
  return (
    <div className="flex w-[15px] shrink-0 flex-col items-center justify-between rounded-tr-lg bg-[#fcfcfc] py-2" aria-hidden="true">
      <svg viewBox="0 0 10 7" width="10" height="7" fill="#8b8b8b"><path d="M5 0l5 7H0z" /></svg>
      <div className="mt-2 flex-1 self-stretch px-[3px]">
        <div className="h-[76%] rounded-full bg-[#8b8b8b]" />
      </div>
      <svg viewBox="0 0 10 7" width="10" height="7" fill="#8b8b8b"><path d="M0 0h10L5 7z" /></svg>
    </div>
  );
}

export default function App() {
  return (
    <div className="flex h-screen flex-col overflow-hidden bg-[#3b3b3b]">
      <TabStrip />
      <Toolbar />
      <div className="mx-1 flex min-h-0 flex-1 overflow-hidden rounded-t-lg bg-white">
        <div className={`${UI} min-w-0 flex-1 overflow-hidden text-[#212529]`}>
          <SiteHeader />
          <main className="mx-auto max-w-[1320px] px-3">
            <h2 className="pt-[15px] text-[22px] leading-8 font-semibold">
              Encontrarás expertos en: <span className="text-[#94406b]">Albañilería</span>
            </h2>
            <hr className="mt-3.5 border-[#c8c9ca]" />
            <h1 className="mt-4 mb-2 text-[30px] leading-10 font-semibold">Ubicación actual</h1>
            <MapPanel />
            <h2 className="mt-8 text-[26px] leading-9 font-semibold">Cosas que podrían interesarte...</h2>
            <section className="grid grid-cols-4 items-center px-3 pt-4">
              {ARTICLES.map((article) => (
                <ArticleCard key={article.title} {...article} />
              ))}
            </section>
          </main>
        </div>
        <ScrollBar />
      </div>
    </div>
  );
}
